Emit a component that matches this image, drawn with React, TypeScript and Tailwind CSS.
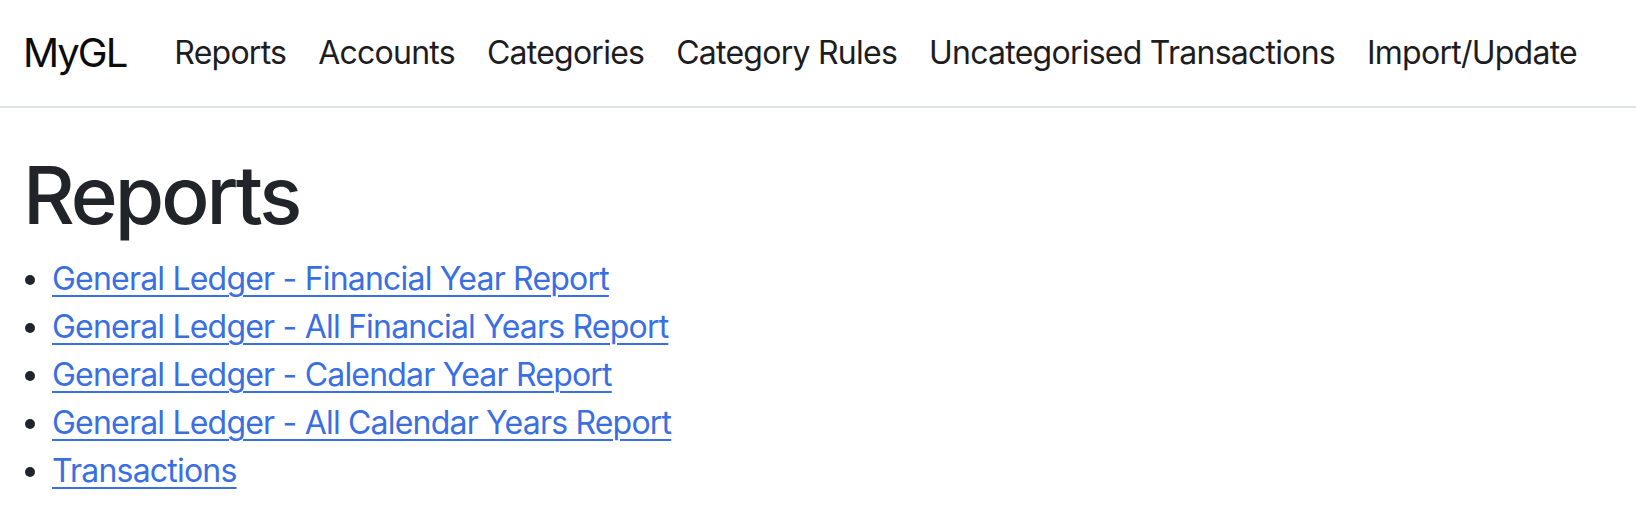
import React from 'react';

const navLinks = ['Reports', 'Accounts', 'Categories', 'Category Rules', 'Uncategorised Transactions', 'Import/Update'];

const reports = [
    'General Ledger - Financial Year Report',
    'General Ledger - All Financial Years Report',
    'General Ledger - Calendar Year Report',
    'General Ledger - All Calendar Years Report',
    'Transactions',
];

const App: React.FC = () => {
    return (
        <div className="min-h-screen bg-white text-[#212529] font-['Inter','Liberation_Sans',sans-serif]">
            <nav className="h-[108px] border-b-2 border-[#dee2e6] flex items-center px-[23px] whitespace-nowrap">
                <a href="#" className="text-[40px] leading-none tracking-[-2px] text-[#0b0b0b] mr-[32px]">
                    MyGL
                </a>
                <ul className="flex items-center">
                    {navLinks.map((link) => (
                        <li key={link}>
                            <a href="#" className="block px-4 text-[32px] leading-none tracking-[-0.75px] text-[#1d1d1f]">
                                {link}
                            </a>
                        </li>
                    ))}
                </ul>
            </nav>

            <main className="px-[23px]">
                <h1 className="mt-[39px] mb-3 text-[80px] leading-[1.2] font-medium tracking-[-3px]">Reports</h1>
                <ul className="list-disc pl-[29px] text-[32px] leading-[48px] tracking-[-0.8px] whitespace-nowrap">
                    {reports.map((r) => (
                        <li key={r} className="marker:text-[#212529]">
                            <a href="#" className="text-[#3a6fe3] underline underline-offset-[5px] decoration-2">
                                {r}
                            </a>
                        </li>
                    ))}
                </ul>
            </main>
        </div>
    );
};

export default App;
